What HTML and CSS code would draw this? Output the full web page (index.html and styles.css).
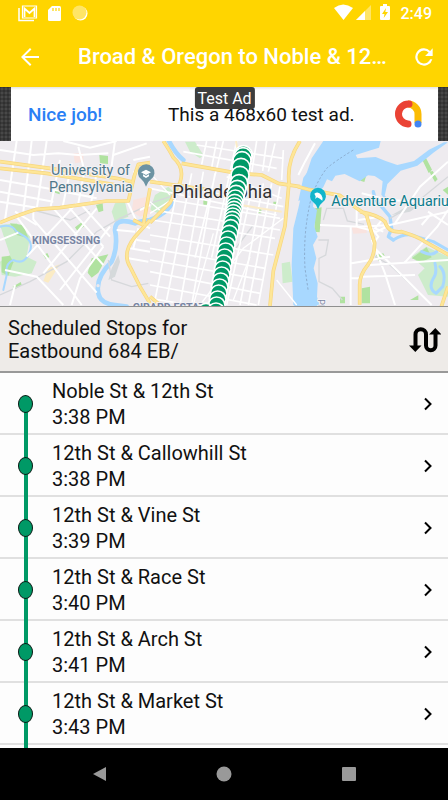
FILE: index.html
```html
<!DOCTYPE html>
<html lang="en">
<head>
<meta charset="utf-8">
<meta name="viewport" content="width=device-width, initial-scale=1">
<title>Scheduled Stops</title>
<link rel="stylesheet" href="styles.css">
</head>
<body>
<header class="top">
  <div class="status">
    <svg class="status-left" width="72" height="18" viewBox="0 0 72 18" aria-hidden="true">
      <path d="M1 4v12.500h15" fill="none" stroke="#fff" stroke-width="1.500"/>
      <path d="M4.500 2h14v12h-14z" fill="none" stroke="#fff" stroke-width="1.200"/>
      <path d="M6.500 13V4.500l5 4.500 5-4.500V13" fill="none" stroke="#fff" stroke-width="1.800"/>
      <path d="M34 2h7.500q1.500 0 1.500 1.500v12q0 1.500-1.500 1.500h-10q-1.500 0-1.500-1.500V6z" fill="#fff"/>
      <path d="M35 4v3M38 4v3M41 4v3" stroke="#ffd500" stroke-width="1.200"/>
      <circle cx="62.500" cy="9.500" r="7" fill="#fff"/>
      <circle cx="61.500" cy="8.500" r="7" fill="#ffe566"/>
    </svg>
    <svg class="status-right" width="58" height="18" viewBox="0 0 58 18" aria-hidden="true">
      <path d="M0 4Q9-3 19 4L9.500 16z" fill="#fff"/>
      <path d="M22 16L37 1v15z" fill="#ffe566"/>
      <path d="M22 16L31 7v9z" fill="#fff"/>
      <path d="M49 0h4v2h2q1 0 1 1v12q0 1-1 1h-8q-1 0-1-1V3q0-1 1-1h2z" fill="#fff"/>
      <path d="M52 4l-4 6h2.500l-.8 4 4.300-6h-2.700z" fill="#ffd500"/>
    </svg>
    <span class="clock">2:49</span>
  </div>
  <div class="appbar">
    <button class="icon-btn" aria-label="Back">
      <svg width="24" height="24" viewBox="0 0 24 24"><path d="M21 11H6.800l6.600-6.600L12 3l-9 9 9 9 1.400-1.400L6.800 13H21z" fill="#fff"/></svg>
    </button>
    <h1>Broad &amp; Oregon to Noble &amp; 12th Street</h1>
    <button class="icon-btn" aria-label="Refresh">
      <svg width="26" height="26" viewBox="0 0 24 24"><path d="M17.650 6.350A8 8 0 1 0 19.730 14h-2.080A6 6 0 1 1 12 6c1.660 0 3.140.69 4.220 1.780L13 11h7V4z" fill="#fff"/></svg>
    </button>
  </div>
</header>

<aside class="ad">
  <div class="ad-card">
    <span class="ad-cta">Nice job!</span>
    <span class="ad-copy">This a 468x60 test ad.</span>
    <svg width="28" height="28" viewBox="0 0 28 28" aria-hidden="true">
      <path d="M14 4a10 10 0 0 1 10 10v9" fill="none" stroke="#fbbc04" stroke-width="7"/>
      <path d="M15 4A10 10 0 1 0 14 24" fill="none" stroke="#ea4335" stroke-width="7" stroke-linecap="round"/>
      <circle cx="24" cy="24" r="3.500" fill="#4285f4"/>
    </svg>
    <span class="ad-tag">Test Ad</span>
  </div>
</aside>

<svg class="map" viewBox="0 3 1344 495" preserveAspectRatio="xMidYMid slice" role="img" aria-label="Route map of Philadelphia">
  <rect width="1344" height="500" fill="#eeebef"/>

  <!-- parks -->
  <g fill="#cdeccb">
    <path d="M0 255l50-5 40 40-10 60 30 15-15 35-50 10-40-5-5-40 30-20z"/>
    <path d="M345 190l30-5 10 45-40 15-10-30z"/>
    <path d="M555 5l30 0 25 40-10 10-30-20z"/>
    <path d="M465 165l40-25 20 20-50 60-25-10z"/>
    <path d="M845 370l25-5 8 60-30 5z"/>
    <path d="M1234 350l45-30 65 30v120l-60-5-30-60 20-20z"/>
  </g>
  <g fill="#b0e2a0">
    <path d="M30 250l40 5 15 40-35-10z"/><path d="M5 350l25-3 10 20-15 40-20-10z"/>
    <path d="M225 262l20-15 8 12-20 15zM130 345l12-6 6 12-10 7zM38 440l24-14 3 8-22 15z"/>
    <path d="M275 355l50-12-30 55-20 15-12-15zM288 195l20-5 2 22-14 5zM298 45l26 3v24l-24-2zM165 145l14 4v14l-14-5z"/>
    <path d="M945 205l20-3-6 75-16-2zM1081 102l10-6 8 10-6 20-12-4zM1266 58l12-4 18 35-10 10zM1288 95l10-2 15 25-8 8zM1328 150l16-10v24z"/>
    <path d="M1085 445l25-5v50h-25zM1020 470l15 0v20h-15zM1230 480l25-14 0 14zM1128 345l22-5 5 10-20 12zM1235 355l45-33 15 30-30 14z"/>
    <path d="M610 180h12v14h-12zM690 150h10v14h-10zM774 208h10v12h-10zM820 185h12v12h-12zM730 110h9v9h-9z"/>
  </g>
  <path d="M145 385l35-12-35 55-15-5z" fill="#fbebc4"/>
  <path d="M220 40h30v25l-25 5zM400 180l40-10 15 50-35 10-25-15zM1055 262l45-5v22l-40 2z" fill="#f9e3df"/>
  <path d="M355 345l-20 40-10 35 20-10 15-45zM1175 225l45-25 40-5-30 20z" fill="#d5d9db"/>

  <!-- rivers -->
  <g fill="#a8d8ff">
    <path d="M1045 3L990 28l-22 35-15 22 2 30-10 25-6 60 12 10-8 50 10 30-14 25 10 40-8 30 12 45-2 40 10 35H895L880 495l-5-120 5-110 15-60 20-90 20-60 35-52z"/>
    <path d="M990 3h152l-5 20-25 8-45 14 5 10 55-4 30 12 35 12 50-12 45-34 45-22h12l-42 30-50 40-50 15-40 40-8 35 12 10-7 7-15-20 4-40-24-16-20-2-25 18-45-22-28 5-10 17-15-6-12 25-50 30-24 10 15-70z"/>
  </g>
  <g fill="none" stroke="#a8d8ff" stroke-linecap="round" stroke-linejoin="round">
    <path d="M505 0q20 40 45 60M525 165q-10 50-75 75-20 0-45 10-60-20-60 20 10 50-10 95-50 50-40 95 5 30 50 35l35 5" stroke-width="14"/>
    <path d="M0 260q35-10 50 15l25 15q30 20 10 55-15 30-45 15-25 10-20 45l-10 45" stroke-width="6"/>
    <path d="M1120 155q5 30 25 45l25 30 5 35-10 25 15 10" stroke-width="10"/>
    <path d="M1180 300q40-25 70-10l50 15 44 25M1265 335q30 15 45 0M1320 380q20 20 8 60l-20 20q-25-15-8-45 12-15 5-45" stroke-width="9"/>
  </g>
  <circle cx="294" cy="437" r="5" fill="#ece9ed"/>
  <path d="M1060 30q-50 30-80 55-45 60-55 130-15 80-10 170l10 70" fill="none" stroke="#7b95b5" stroke-width="2" stroke-dasharray="7 6"/>

  <!-- railways -->
  <g fill="none" stroke="#d6d8db" stroke-width="4">
    <path d="M0 465l90-40 110-60 90-90 70-40 75-35M325 360l10 60 60 20 50-10M100 210l110 30 60-30M450 190l150-50M700 335l60-80"/>
    <path d="M970 240l10-35 50 0 12 38 50 10M955 300l30 0-8 45-20 10v70l40 20 30 35M1125 350l45 25 90 85M1170 235l70-40 104-85"/>
  </g>

  <!-- city streets -->
  <g fill="none" stroke="#fff" stroke-width="6">
    <path d="M0 30l100 15 75-5 60 5 90-5M0 120l140 25 150 30M0 155l160 30M0 185l120 20M50 3L15 240M95 3L70 215M140 3l-30 205M180 60l-28 140M215 70l-27 130M255 85l-22 115M290 100l-18 95M190 3l80 20 80-20M235 20l15 60M345 3l-15 110"/>
    <path d="M50 230l195 265M100 208v30l190 220M160 205l150 170M205 200l105 120M245 195l85 95M0 300l55-22M110 255l-65-40M80 350L230 190M130 400L290 205M180 450l150-190M15 390l95 20 80 85M215 495l25-80 70-95M30 495l15-60"/>
    <path d="M380 180l30 65 40 20M390 325l60 10M385 355l60 10M415 265l-15 60M350 270l55 5M400 60l50-10M400 95l50 10M410 300l40 5M420 210l30-15M340 45l100-35"/>
    <path d="M535 130l-70 350M575 100l-75 380M610 95l-70 400M645 100l-70 395M670 3l-85 350M710 3l-75 350M755 150l-75 345M790 130l-70 365M815 130l-70 365M840 140l-65 355M770 3l-15 95M800 3l-12 90M620 3l-15 70M650 3l-15 80M825 10l-20 85M850 30l-5 90" stroke-width="5"/>
    <path d="M450 145l380 80M490 215l350 55M455 240l370 55M450 285l370 60M450 325l345 60M450 360l340 60M450 395l330 65M450 435l320 60M620 155l230 45M680 110l165 65M510 180l330 55M550 35l280 50M590 15l260 40M450 475l120 20" stroke-width="5"/>
    <path d="M450 220l80-50M600 495l130-170 120-90M700 480l50-130M830 420l60 75M450 185l40 35M460 110l50 55M640 280l-60 215" stroke-width="4"/>
    <path d="M895 105l20-40 30-55"/>
  </g>
  <!-- east bank streets -->
  <g fill="none" stroke="#fff" stroke-width="6">
    <path d="M960 255l120 5 90-5 174-40M1052 260v235M1055 370l115-20M1085 410l160-5M1055 415h30M1110 375l235-15M1070 190v70l60 15 40-20M1085 160l80 20 179 10M1125 325l95 95 75 75M1115 300l40 100 30 95M1212 370l100-110 32-50M1185 250l75-110 84-75M1295 220l-30 35M1344 255l-60-40M1140 230l-65 10M1115 265l20 25-15 20M1150 235l-25 30 25 10"/>
  </g>

  <!-- arterials: casing, then fill -->
  <g fill="none" stroke-linejoin="round">
    <g stroke="#f7d680" stroke-width="11">
      <path d="M0 248q60-25 110-40l70-5 140-20h65l18-75 12-35 35-5M0 65l150 20 200 30 45 10M0 85l140 15 210 35"/>
      <path d="M490 3q20 30 30 50 35 30 20 75l-30 60-60 60M545 70l170 30 70 5 50 25 65 10M450 125l180 25"/>
      <path d="M900 3q-40 60-33 125l-12 130-35 135-10 105"/>
      <path d="M450 240l-45 50q-40 50-15 90l30 60 30 50M450 145l-20 110M400 240l30 15"/>
      <path d="M894 140l30 8 95 18 50 38 30 20 10 35 15 50q0 40-20 65-25 30-25 60v60M1080 215q55 10 75 30 10 35 50 30 50 15 70 30l80 45M450 470l30 25M1344 440l-20 60"/>
    </g>
    <g stroke="#fee697" stroke-width="7">
      <path d="M0 248q60-25 110-40l70-5 140-20h65l18-75 12-35 35-5M0 65l150 20 200 30 45 10M0 85l140 15 210 35"/>
      <path d="M490 3q20 30 30 50 35 30 20 75l-30 60-60 60M545 70l170 30 70 5 50 25 65 10M450 125l180 25"/>
      <path d="M900 3q-40 60-33 125l-12 130-35 135-10 105"/>
      <path d="M450 240l-45 50q-40 50-15 90l30 60 30 50M450 145l-20 110M400 240l30 15"/>
      <path d="M894 140l30 8 95 18 50 38 30 20 10 35 15 50q0 40-20 65-25 30-25 60v60M1080 215q55 10 75 30 10 35 50 30 50 15 70 30l80 45M450 470l30 25M1344 440l-20 60"/>
    </g>
    <path d="M708 3l5 30-30 250-50 212M690 190l155 25M620 160l60 10" stroke="#fbecc8" stroke-width="6"/>
  </g>

  <!-- labels -->
  <g class="map-label">
    <g class="school">
      <text x="153" y="105">University of</text>
      <text x="147" y="155">Pennsylvania</text>
    </g>
    <text class="district" x="96" y="311">KINGSESSING</text>
    <text class="district" x="398" y="514">GIRARD ESTATE</text>
    <text class="city" x="517" y="175">Philadelphia</text>
    <text class="aquarium" x="994" y="198">Adventure Aquarium</text>
    <text class="state" transform="translate(955 478) rotate(90)">PENNSYLVANIA</text>
  </g>
  <path d="M438 140q-4-14-14-22a25 25 0 1 1 29 0q-11 8-15 22z" fill="#6c93a3"/>
  <path d="M438 89l-15 8 15 8 15-8zM429 103v6l9 5 9-5v-6l-9 5z" fill="#fff"/>
  <path d="M954 208q-3-13-14-21a24 24 0 1 1 28 0q-11 8-14 21z" fill="#12b5cb"/>
  <path d="M943 161q12-9 21 4 5 7 3 17-9-8-16-10l-5 5 1-8z" fill="#fff"/>

  <!-- stops along the route -->
  <g class="stops">
    <circle cx="730" cy="44" r="27"/><circle cx="729" cy="50" r="27"/><circle cx="726" cy="62" r="27"/><circle cx="723" cy="82" r="27"/><circle cx="720" cy="106" r="27"/><circle cx="717" cy="130" r="26"/><circle cx="712" cy="147" r="26"/><circle cx="708" cy="162" r="26"/><circle cx="706" cy="176" r="26"/><circle cx="704" cy="188" r="25"/><circle cx="703" cy="199" r="25"/><circle cx="702" cy="209" r="25"/><circle cx="700" cy="219" r="25"/><circle cx="698" cy="229" r="25"/><circle cx="697" cy="239" r="25"/><circle cx="695" cy="250" r="25"/><circle cx="692" cy="264" r="25"/><circle cx="688" cy="281" r="25"/><circle cx="684" cy="298" r="25"/><circle cx="680" cy="316" r="25"/><circle cx="677" cy="334" r="25"/><circle cx="674" cy="352" r="25"/><circle cx="671" cy="370" r="25"/><circle cx="668" cy="388" r="25"/><circle cx="665" cy="406" r="25"/><circle cx="662" cy="424" r="25"/><circle cx="659" cy="442" r="25"/><circle cx="656" cy="460" r="25"/><circle cx="653" cy="478" r="25"/><circle cx="650" cy="496" r="25"/><circle cx="618" cy="515" r="25"/><circle cx="648" cy="514" r="25"/>
  </g>
</svg>

<section class="heading">
  <h2>Scheduled Stops for<br>Eastbound 684 EB/</h2>
  <button class="icon-btn" aria-label="Switch direction">
    <svg width="32" height="26" viewBox="0 0 32 26"><path d="M6.500 19V7.500a5 5 0 0 1 10.500 0v11a4.700 4.700 0 0 0 9.500 0V7" fill="none" stroke="#000" stroke-width="4"/><path d="M0 18.500h12.500l-6.200 6.500zM20 7.500h12.500l-6.200-6.500z"/></svg>
  </button>
</section>

<ol class="list">
  <li><a href="#s1"><span class="dot"></span><span class="stop"><span>Noble St &amp; 12th St</span><time>3:38 PM</time></span><svg class="chev" viewBox="0 0 8 14"><path d="M1 1.500l5.500 5.500L1 12.500"/></svg></a></li>
  <li><a href="#s2"><span class="dot"></span><span class="stop"><span>12th St &amp; Callowhill St</span><time>3:38 PM</time></span><svg class="chev" viewBox="0 0 8 14"><path d="M1 1.500l5.500 5.500L1 12.500"/></svg></a></li>
  <li><a href="#s3"><span class="dot"></span><span class="stop"><span>12th St &amp; Vine St</span><time>3:39 PM</time></span><svg class="chev" viewBox="0 0 8 14"><path d="M1 1.500l5.500 5.500L1 12.500"/></svg></a></li>
  <li><a href="#s4"><span class="dot"></span><span class="stop"><span>12th St &amp; Race St</span><time>3:40 PM</time></span><svg class="chev" viewBox="0 0 8 14"><path d="M1 1.500l5.500 5.500L1 12.500"/></svg></a></li>
  <li><a href="#s5"><span class="dot"></span><span class="stop"><span>12th St &amp; Arch St</span><time>3:41 PM</time></span><svg class="chev" viewBox="0 0 8 14"><path d="M1 1.500l5.500 5.500L1 12.500"/></svg></a></li>
  <li><a href="#s6"><span class="dot"></span><span class="stop"><span>12th St &amp; Market St</span><time>3:43 PM</time></span><svg class="chev" viewBox="0 0 8 14"><path d="M1 1.500l5.500 5.500L1 12.500"/></svg></a></li>
  <li></li>
</ol>

<nav class="nav" aria-label="System">
  <button aria-label="Back"><svg width="16" height="16" viewBox="0 0 16 16"><path d="M15 1v14L2 8z"/></svg></button>
  <button aria-label="Home"><svg width="16" height="16" viewBox="0 0 16 16"><circle cx="8" cy="8" r="7.500"/></svg></button>
  <button aria-label="Recents"><svg width="16" height="16" viewBox="0 0 16 16"><rect x="1" y="1" width="14" height="14" rx="1"/></svg></button>
</nav>
</body>
</html>
```
FILE: styles.css
```css
* { box-sizing: border-box; }

body {
  margin: 0;
  height: 100vh;
  display: flex;
  flex-direction: column;
  overflow: hidden;
  background: #fdfdfd;
  color: #111;
  font-family: Roboto, "Liberation Sans", sans-serif;
}

h1, h2, ol { margin: 0; padding: 0; }

button {
  border: 0;
  padding: 0;
  background: none;
  display: flex;
}

.top {
  flex: none;
  background: #ffd500;
  color: #fff;
}

.status {
  height: 26px;
  padding: 0 16px 0 18px;
  display: flex;
  align-items: center;
}

.status-right { margin-left: auto; }

.clock {
  width: 40px;
  text-align: right;
  font-size: 16px;
  font-weight: 500;
}

.appbar {
  height: 61px;
  padding: 0 11px 0 18px;
  display: flex;
  align-items: center;
}

.appbar h1 {
  flex: 1;
  min-width: 0;
  margin: 0 24px 0 36px;
  overflow: hidden;
  white-space: nowrap;
  text-overflow: ellipsis;
  font-size: 22px;
  font-weight: 500;
  line-height: 28px;
}

.ad {
  flex: none;
  height: 54px;
  padding: 0 10px 0 11px;
  background: #303030 radial-gradient(circle, #484848 1px, transparent 2px) 0 0 / 4px 4px;
}

.ad-card {
  position: relative;
  height: 54px;
  padding: 0 16px 0 17px;
  display: flex;
  align-items: center;
  background: linear-gradient(#e4e4e4, #fff 3px);
  font-size: 19px;
}

.ad-cta {
  flex: none;
  width: 140px;
  color: #2a7ff5;
  font-weight: 500;
}

.ad-copy { flex: 1; }

.ad-tag {
  position: absolute;
  top: 0;
  left: 50%;
  transform: translateX(-50%);
  padding: 1px 3px 0;
  border-radius: 3px;
  background: #3c3c3c;
  color: #fff;
  font-size: 16px;
  line-height: 21px;
}

.map {
  flex: none;
  display: block;
  width: 100%;
  height: 165px;
}

.map-label text {
  font-size: 43px;
  stroke: #f4f2f5;
  stroke-width: 6px;
  stroke-linejoin: round;
  paint-order: stroke;
}

.map-label .school { fill: #4f7788; }
.map-label .city { font-size: 55px; fill: #333; }
.map-label .aquarium { fill: #0b7c8c; }

.map-label .district {
  font-size: 32px;
  font-weight: 700;
  fill: #7784a3;
}

.map-label .state {
  font-size: 27px;
  fill: #7784a3;
}

.stops {
  fill: #009966;
  stroke: #fff;
  stroke-width: 5px;
}

.heading {
  flex: none;
  height: 67px;
  padding: 2px 7px 0 8px;
  display: flex;
  align-items: center;
  justify-content: space-between;
  background: #eeebe8;
  border-top: 1px solid #8f8f8f;
  border-bottom: 2px solid #999;
}

.heading h2 {
  font-size: 20px;
  font-weight: 400;
  line-height: 23px;
}

.list {
  flex: 1;
  min-height: 0;
  overflow: hidden;
  list-style: none;
}

/* The route line is painted above the row divider so that it stays unbroken. */
.list li {
  height: 62px;
  background:
    linear-gradient(#009966, #009966) 24px 0 / 4px 100% no-repeat,
    linear-gradient(#e0e0e0, #e0e0e0) 0 100% / 100% 2px no-repeat;
}

.list li:first-child {
  background-position: 24px 100%, 0 100%;
  background-size: 4px 50%, 100% 2px;
}

.list a {
  height: 62px;
  padding: 0 16px 0 18px;
  display: flex;
  align-items: center;
  color: inherit;
  text-decoration: none;
}

.dot {
  width: 15px;
  height: 18px;
  border: 1px solid #0a1a14;
  border-radius: 50%;
  background: #009966;
}

.stop {
  flex: 1;
  padding-left: 19px;
  display: flex;
  flex-direction: column;
  font-size: 20px;
  line-height: 26px;
}

.chev {
  width: 8px;
  height: 14px;
  fill: none;
  stroke: #000;
  stroke-width: 2px;
}

.nav {
  flex: none;
  height: 52px;
  padding: 0 37px;
  display: grid;
  grid-template-columns: repeat(3, 1fr);
  align-items: center;
  justify-items: center;
  background: #000;
  fill: #999;
}
```
